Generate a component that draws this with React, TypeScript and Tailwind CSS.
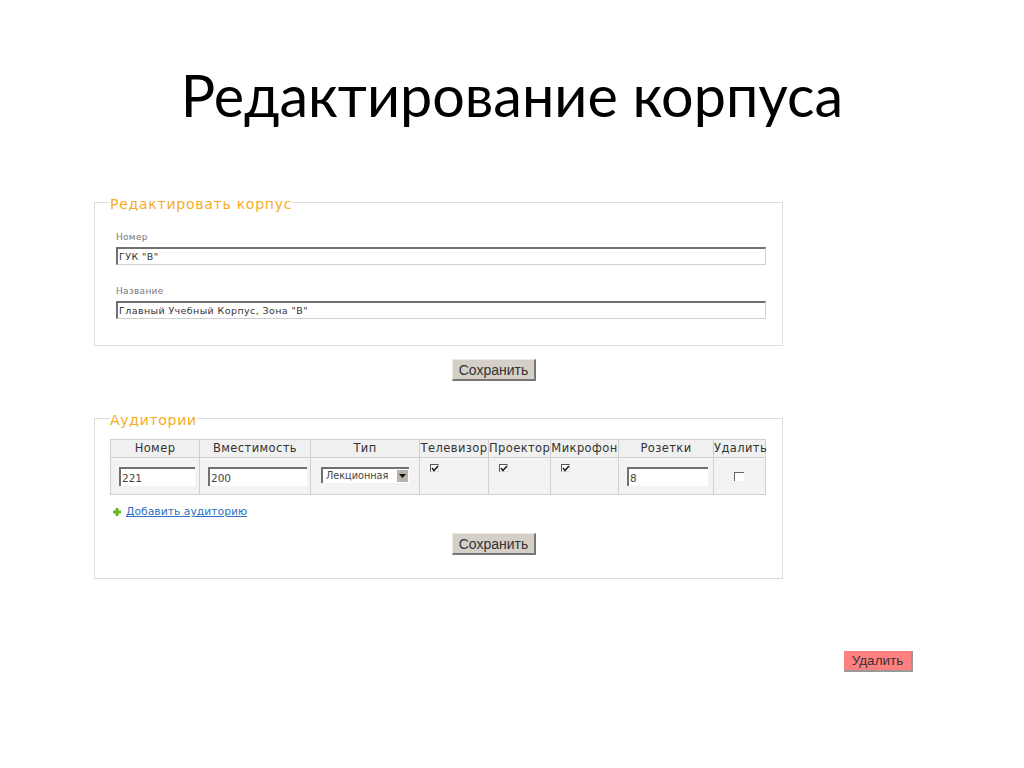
const ui = { fontFamily: '"DejaVu Sans", sans-serif' };

const columns = [
  { title: "Номер", width: "w-[89px]" },
  { title: "Вместимость", width: "w-[111px]" },
  { title: "Тип", width: "w-[109px]" },
  { title: "Телевизор", width: "w-[69px]" },
  { title: "Проектор", width: "w-[62px]" },
  { title: "Микрофон", width: "w-[68px]" },
  { title: "Розетки", width: "w-[95px]" },
  { title: "Удалить", width: "w-[52px]" },
];

function Field({ label, value, className }: { label: string; value: string; className?: string }) {
  return (
    <div className={className}>
      <div className="text-[9px] leading-[12px] text-[#777] tracking-[0.3px]">{label}</div>
      <div className="mt-[4px] h-[18px] border-t-2 border-l-2 border-r border-b border-t-[#707070] border-l-[#707070] border-r-[#d0d0d0] border-b-[#d0d0d0] bg-white pl-[1px] text-[9.5px] leading-[15px] text-[#333] tracking-[0.4px]">
        {value}
      </div>
    </div>
  );
}

function SaveButton({ className }: { className: string }) {
  return (
    <button
      className={`${className} block h-[22px] w-[84px] border-r-2 border-b-2 border-t border-l border-r-[#777] border-b-[#777] border-t-[#eeeae2] border-l-[#eeeae2] bg-[#d4d0c8] text-[14px] leading-[18px] text-[#333]`}
      style={{ fontFamily: '"Liberation Sans", sans-serif' }}
    >
      Сохранить
    </button>
  );
}

function CellInput({ value, width }: { value: string; width: string }) {
  return (
    <div className={`${width} h-[19px] border-t-2 border-l-2 border-t-[#707070] border-l-[#707070] bg-white pl-[1px] text-[10.5px] leading-[18px] text-[#444]`}>
      {value}
    </div>
  );
}

function Check({ checked }: { checked?: boolean }) {
  return (
    <div className="h-[8px] w-[9px] border-t border-l border-t-[#555] border-l-[#555] border-r border-b border-r-[#ddd] border-b-[#ddd] bg-white">
      {checked && (
        <svg viewBox="0 0 8 7" className="h-[7px] w-[8px]">
          <path d="M1 3 L3 5.5 L7 1" fill="none" stroke="#222" strokeWidth="1.6" />
        </svg>
      )}
    </div>
  );
}

export default function App() {
  return (
    <div className="h-[768px] w-[1024px] overflow-hidden bg-white" style={ui}>
      <h1
        className="pt-[59px] text-center text-[57.5px] leading-[72px] text-black"
        style={{ fontFamily: 'Lato, "Open Sans", sans-serif' }}
      >
        Редактирование корпуса
      </h1>

      <fieldset className="mt-[63px] ml-[94px] h-[152px] w-[689px] border border-[#dcdcdc] px-[15px]">
        <legend className="translate-y-[2px] text-[14px] leading-[17px] text-[#f5ac1e] tracking-[0.75px]">Редактировать корпус</legend>
        <div className="pt-[20px] pl-[6px] pr-[1px]">
          <Field label="Номер" value='ГУК "В"' />
          <Field label="Название" value='Главный Учебный Корпус, Зона "В"' className="mt-[20px]" />
        </div>
      </fieldset>

      <SaveButton className="mt-[13px] ml-[452px]" />

      <fieldset className="mt-[29px] ml-[94px] h-[169px] w-[689px] border border-[#dcdcdc] px-[15px]">
        <legend className="translate-y-[2px] text-[14px] leading-[17px] text-[#f5ac1e] tracking-[0.7px]">Аудитории</legend>
        <table className="mt-[12px] w-[655px] table-fixed border-collapse text-[10px] text-[#333]">
          <thead>
            <tr className="h-[18px] bg-[#f0f0f0]">
              {columns.map((c) => (
                <th key={c.title} className={`${c.width} border border-[#d0d0d0] p-0 text-center text-[11.5px] font-normal tracking-[0.4px] whitespace-nowrap`}>
                  {c.title}
                </th>
              ))}
            </tr>
          </thead>
          <tbody>
            <tr className="h-[37px] bg-[#f3f3f3]">
              <td className="border border-[#d0d0d0] pl-[8px]">
                <CellInput value="221" width="w-[76px]" />
              </td>
              <td className="border border-[#d0d0d0] pl-[8px]">
                <CellInput value="200" width="w-[99px]" />
              </td>
              <td className="border border-[#d0d0d0] pl-[10px] pb-[2px]">
                <div className="flex h-[16px] w-[88px] border-t-2 border-l-2 border-t-[#707070] border-l-[#707070] bg-white">
                  <span className="flex-1 pl-[3px] text-[9.7px] leading-[14px] text-[#444]">Лекционная</span>
                  <span className="mt-[1px] mr-[1px] flex h-[12px] w-[11px] items-center justify-center bg-[#b8b4ac]">
                    <svg viewBox="0 0 7 4" className="h-[4px] w-[7px]">
                      <path d="M0 0 H7 L3.5 4 Z" fill="#111" />
                    </svg>
                  </span>
                </div>
              </td>
              <td className="border border-[#d0d0d0] pl-[10px] pb-[16px]">
                <Check checked />
              </td>
              <td className="border border-[#d0d0d0] pl-[10px] pb-[16px]">
                <Check checked />
              </td>
              <td className="border border-[#d0d0d0] pl-[10px] pb-[16px]">
                <Check checked />
              </td>
              <td className="border border-[#d0d0d0] pl-[8px]">
                <CellInput value="8" width="w-[81px]" />
              </td>
              <td className="border border-[#d0d0d0] pl-[20px]">
                <div className="h-[9px] w-[10px] border-t border-l border-t-[#666] border-l-[#666] bg-white" />
              </td>
            </tr>
          </tbody>
        </table>

        <div className="mt-[9px] flex items-center pl-[3px]">
          <svg viewBox="0 0 8 8" className="h-[8px] w-[8px]">
            <path d="M2.5 0 H5.5 V2.5 H8 V5.5 H5.5 V8 H2.5 V5.5 H0 V2.5 H2.5 Z" fill="#6ab820" />
          </svg>
          <a className="ml-[5px] text-[10.8px] leading-[15px] text-[#2f6fc0] underline">Добавить аудиторию</a>
        </div>

        <SaveButton className="mt-[14px] ml-[342px]" />
      </fieldset>

      <div className="mt-[72px] flex justify-end pr-[111px]">
        <button
          className="h-[21px] w-[69px] border-r-2 border-b-2 border-r-[#999] border-b-[#999] bg-[#ff8080] text-[13.5px] leading-[18px] text-[#333]"
          style={{ fontFamily: '"Liberation Sans", sans-serif' }}
        >
          Удалить
        </button>
      </div>
    </div>
  );
}
